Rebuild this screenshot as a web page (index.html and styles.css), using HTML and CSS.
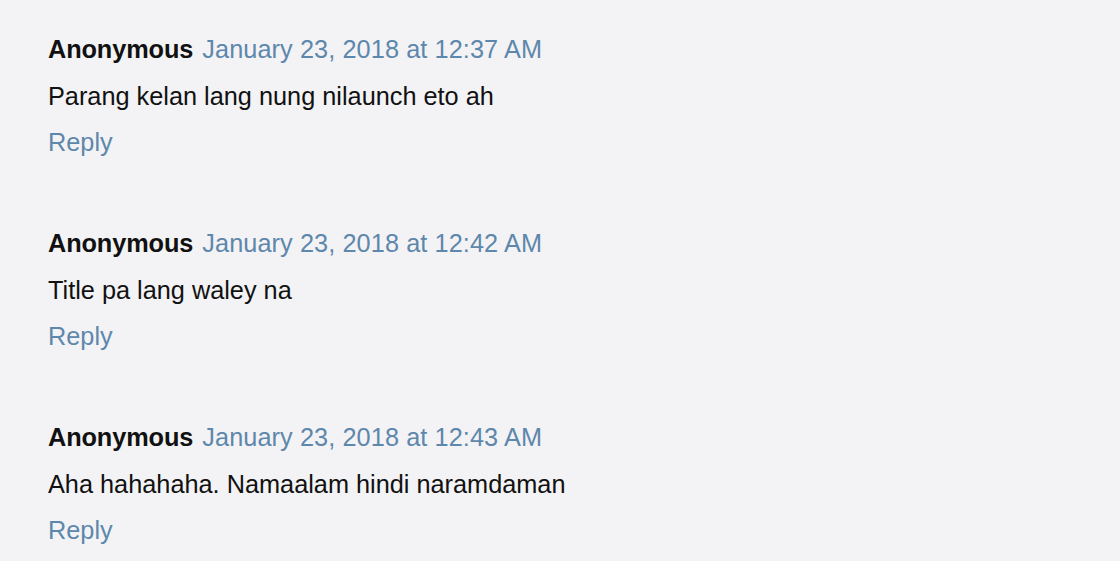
FILE: index.html
```html
<!DOCTYPE html>
<html>
<head>
<meta charset="utf-8">
<link rel="stylesheet" href="styles.css">
</head>
<body>
<div class="comments">
  <div class="comment">
    <div class="head"><span class="author">Anonymous</span> <a class="date" href="#">January 23, 2018 at 12:37 AM</a></div>
    <div class="text">Parang kelan lang nung nilaunch eto ah</div>
    <div class="actions"><a class="reply" href="#">Reply</a></div>
  </div>
  <div class="comment">
    <div class="head"><span class="author">Anonymous</span> <a class="date" href="#">January 23, 2018 at 12:42 AM</a></div>
    <div class="text">Title pa lang waley na</div>
    <div class="actions"><a class="reply" href="#">Reply</a></div>
  </div>
  <div class="comment">
    <div class="head"><span class="author">Anonymous</span> <a class="date" href="#">January 23, 2018 at 12:43 AM</a></div>
    <div class="text">Aha hahahaha. Namaalam hindi naramdaman</div>
    <div class="actions"><a class="reply" href="#">Reply</a></div>
  </div>
</div>
</body>
</html>
```
FILE: styles.css
```css
html, body {
  margin: 0;
  padding: 0;
  background: #f3f3f5;
}
body {
  font-family: "Liberation Sans", Arial, sans-serif;
  font-size: 25.3px;
  color: #111;
  height: 561px;
  overflow: hidden;
}
.comments {
  padding: 26px 0 0 48px;
  display: flex;
  flex-direction: column;
  gap: 55px;
}
.comment {
  display: flex;
  flex-direction: column;
}
.head, .text, .actions {
  line-height: 46px;
  white-space: nowrap;
}
.head {
  margin-bottom: 1px;
  word-spacing: 2px;
}
.author {
  font-weight: bold;
  color: #111;
  word-spacing: 0;
  letter-spacing: -0.1px;
}
.date {
  letter-spacing: 0.08px;
  word-spacing: 0;
}
.date, .reply {
  color: #5e87ac;
  text-decoration: none;
}
```
